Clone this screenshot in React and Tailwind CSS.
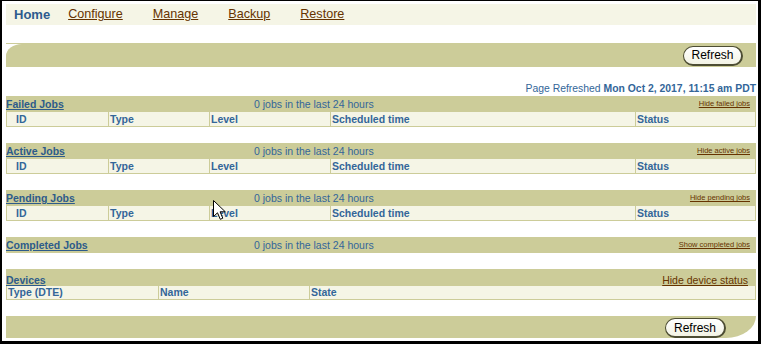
const tabs = ["Configure", "Manage", "Backup", "Restore"]

const jobSections = [
  { title: "Failed Jobs", toggle: "Hide failed jobs", table: true },
  { title: "Active Jobs", toggle: "Hide active jobs", table: true },
  { title: "Pending Jobs", toggle: "Hide pending jobs", table: true },
  { title: "Completed Jobs", toggle: "Show completed jobs", table: false },
]

const jobCols = ["ID", "Type", "Level", "Scheduled time", "Status"]

const RefreshButton = ({ className = "" }) => (
  <button
    className={`h-[20px] w-[60px] rounded-full border border-[#4d4d33] border-r-2 border-b-2 bg-gradient-to-b from-white to-[#f3f3e4] text-[12px] leading-none text-black ${className}`}
  >
    Refresh
  </button>
)

const JobSection = ({ title, toggle, table }) => (
  <div className="mb-[16px]">
    <div className="grid h-[16px] grid-cols-[248px_1fr_auto] items-center bg-[#cccc99] text-[10.5px] leading-none">
      <a href="#" className="font-bold text-[#2d5b8a] underline">
        {title}
      </a>
      <span className="text-[#336699]">0 jobs in the last 24 hours</span>
      <a href="#" className="pr-[6px] text-[7.5px] text-[#663300] underline">
        {toggle}
      </a>
    </div>
    {table && (
      <div className="grid h-[15px] grid-cols-[101px_101px_121px_305px_1fr] border border-t-0 border-[#cccc99] bg-[#f5f5e6] text-[10.5px] font-bold leading-[14px] text-[#336699]">
        {jobCols.map((c, i) => (
          <div key={c} className={i === 0 ? "pl-[9px]" : "border-l border-[#cccc99] pl-[1px]"}>
            {c}
          </div>
        ))}
      </div>
    )}
  </div>
)

export default function App() {
  return (
    <div className="relative h-[344px] w-[761px] overflow-hidden border-t border-r-[3px] border-b-[3px] border-l-2 border-black bg-white pl-[4px] pr-[2px] pt-[3px] font-['Liberation_Sans',Arial,sans-serif]">
      {/* top tabs */}
      <div className="flex h-[21px] items-center bg-[#f5f5e6] text-[13px] leading-none">
        <span className="ml-[8px] font-bold text-[#2d5b8e]">Home</span>
        <div className="ml-[18px] flex gap-[30px] text-[12.6px]">
          {tabs.map((t) => (
            <a key={t} href="#" className="text-[#663300] underline">
              {t}
            </a>
          ))}
        </div>
      </div>

      {/* upper action bar */}
      <div className="mt-[18px] border-t border-[#cccc99]">
        <div className="flex h-[23px] items-center justify-end rounded-tl-[16px_12px] bg-[#cccc99] pr-[13px]">
          <RefreshButton />
        </div>
      </div>

      <div className="h-[29px] pt-[16px] text-right text-[10.4px] leading-[12px] text-[#336699]">
        Page Refreshed <span className="font-bold">Mon Oct 2, 2017, 11:15 am PDT</span>
      </div>

      {jobSections.map((s) => (
        <JobSection key={s.title} {...s} />
      ))}

      {/* devices */}
      <div className="mb-[16px]">
        <div className="flex h-[17px] items-end justify-between bg-[#cccc99] pb-[1px] text-[10.5px] leading-none">
          <a href="#" className="font-bold text-[#2d5b8a] underline">
            Devices
          </a>
          <a href="#" className="pr-[8px] text-[#663300] underline">
            Hide device status
          </a>
        </div>
        <div className="grid h-[14px] grid-cols-[151px_151px_1fr] border border-t-0 border-[#cccc99] bg-[#f5f5e6] text-[10.5px] font-bold leading-[13px] text-[#336699]">
          <div className="pl-[1px]">Type (DTE)</div>
          <div className="border-l border-[#cccc99] pl-[1px]">Name</div>
          <div className="border-l border-[#cccc99] pl-[1px]">State</div>
        </div>
      </div>

      {/* lower action bar */}
      <div className="flex h-[22px] items-center justify-end rounded-br-[30px_22px] bg-[#cccc99] pr-[30px]">
        <RefreshButton className="mt-[2px] w-[61px]" />
      </div>

      {/* mouse pointer */}
      <svg className="absolute left-[211px] top-[199px]" width="14" height="21" viewBox="0 0 14 21">
        <path d="M0.5 0.5 L0.5 16.5 L4.5 12.8 L7.3 19.3 L9.8 18.2 L7.1 11.8 L12.3 11.8 Z" fill="white" stroke="black" strokeWidth="1" />
      </svg>
    </div>
  )
}
